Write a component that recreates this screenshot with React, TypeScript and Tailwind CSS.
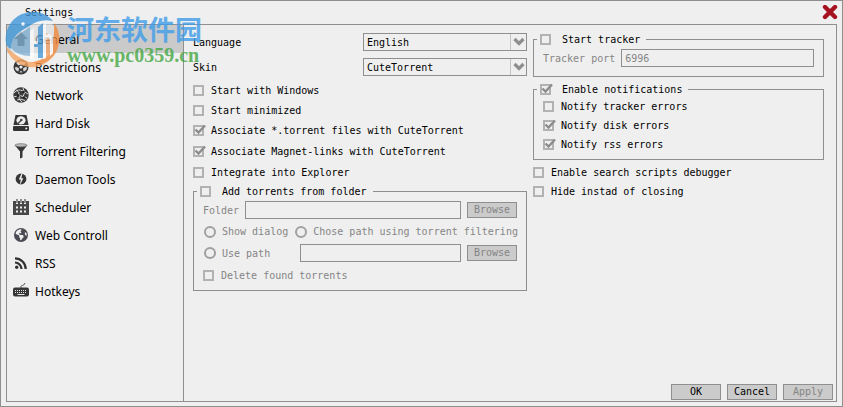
import { useId } from 'react'
import type { ReactNode } from 'react'
import clsx from 'clsx'
import { FaEarthAmericas } from 'react-icons/fa6'

function HomeIcon() {
  return (
    <svg viewBox="0 0 16 16" className="size-4">
      <path d="M8 1 15 8H11.500V15H4.500V8H1Z" fill="#454545" />
    </svg>
  )
}

function RestrictionsIcon() {
  return (
    <svg viewBox="0 0 16 16" className="size-4">
      <circle cx="8" cy="8" r="7.500" fill="#383838" />
      <path d="M3 3.800Q8 .8 13 3.800L10.500 6.500Q8 4.500 5.500 6.500Z" fill="#e4e4e4" />
      <circle cx="8" cy="8" r="1.600" fill="#efefef" />
      <path d="M1.800 8.500Q4 7 6 9.500L5.500 12.500Q2.500 12 1.800 8.500ZM14.200 8.500Q12 7 10 9.500L10.500 12.500Q13.500 12 14.200 8.500Z" fill="#d8d8d8" />
      <path d="M6.500 13.500Q8 10 9.500 13.500Z" fill="#c8c8c8" />
    </svg>
  )
}

function NetworkIcon() {
  return (
    <svg viewBox="0 0 16 16" className="size-4">
      <circle cx="8" cy="8" r="7.700" fill="#3a3a3a" />
      <path d="M1 6Q5 1 10 4T15 7M3 2.500Q7 5 6 9T9 15M1 10Q7 7 14 11M10 1Q13 6 10 10M4 13Q8 11 12 13.500" fill="none" stroke="#dcdcdc" strokeWidth="1" />
      <circle cx="10.500" cy="5" r="1.300" fill="#222" />
      <circle cx="5" cy="8.500" r="1.500" fill="#222" />
      <circle cx="11" cy="10.500" r="1.300" fill="#222" />
    </svg>
  )
}

function DiskIcon() {
  return (
    <svg viewBox="0 0 16 16" className="size-4">
      <path d="M2.500 0h11L15.500 10H.5Z" fill="#333" />
      <rect y="11" width="16" height="5" rx="1" fill="#333" />
      <ellipse cx="8" cy="5.300" rx="4.600" ry="4.100" fill="#ececec" />
      <circle cx="8.300" cy="5" r="1.300" fill="#444" />
      <path d="M8 5.500 4.500 9" stroke="#444" strokeWidth="1.200" />
      <circle cx="13.300" cy="13.500" r="1" fill="#eee" />
    </svg>
  )
}

function FilterIcon() {
  return (
    <svg viewBox="0 0 16 16" className="size-4">
      <path d="M2 2.500 7 8.500V15.500L9.500 14.500V8.500L14 2.500Z" fill="#383838" />
      <ellipse cx="8" cy="2.300" rx="6" ry="1.600" fill="#bdbdbd" stroke="#555" strokeWidth=".6" />
    </svg>
  )
}

function DaemonIcon() {
  return (
    <svg viewBox="0 0 16 16" className="size-4">
      <circle cx="8" cy="8" r="5.400" fill="#363636" />
      <path d="M9 1.500 5.800 8.500H7.800L6.800 14.500 10.300 7.300H8.300L9.500 2.500Z" fill="#efefef" />
    </svg>
  )
}

function CalendarIcon() {
  return (
    <svg viewBox="0 0 16 16" className="size-4">
      <path d="M0 2H3V5H5V2H7V5H9V2H11V5H13V2H16V16H0Z" fill="#484848" />
      <path d="M4 0V4M8 0V4M12 0V4" stroke="#484848" strokeWidth="1.200" />
      <path d="M3 8.500H13M3 12.500H13" stroke="#efefef" strokeWidth="2" strokeDasharray="2 2" />
    </svg>
  )
}

function RssIcon() {
  return (
    <svg viewBox="0 0 16 16" className="size-4">
      <circle cx="3.700" cy="12.300" r="1.700" fill="#333" />
      <path d="M2 7.500A6.500 6.500 0 0 1 8.500 14M2 3.300A10.700 10.700 0 0 1 12.700 14" fill="none" stroke="#333" strokeWidth="2.200" />
    </svg>
  )
}

function KeyboardIcon() {
  return (
    <svg viewBox="0 0 16 16" className="size-4">
      <path d="M8 5V3.500Q8 2.500 9.500 2.500T12 0" fill="none" stroke="#555" strokeWidth="1" />
      <rect y="4.500" width="16" height="9" rx="2" fill="#363636" />
      <path d="M2 7.500H14M2 9.500H14" stroke="#e4e4e4" strokeWidth="1" strokeDasharray="1 1" />
      <path d="M4.500 11.500H11.500" stroke="#e4e4e4" strokeWidth="1" />
    </svg>
  )
}

const SECTIONS: { name: string; icon: ReactNode }[] = [
  { name: 'General', icon: <HomeIcon /> },
  { name: 'Restrictions', icon: <RestrictionsIcon /> },
  { name: 'Network', icon: <NetworkIcon /> },
  { name: 'Hard Disk', icon: <DiskIcon /> },
  { name: 'Torrent Filtering', icon: <FilterIcon /> },
  { name: 'Daemon Tools', icon: <DaemonIcon /> },
  { name: 'Scheduler', icon: <CalendarIcon /> },
  { name: 'Web Controll', icon: <FaEarthAmericas className="size-3.5 mx-px text-[#4a4a52]" /> },
  { name: 'RSS', icon: <RssIcon /> },
  { name: 'Hotkeys', icon: <KeyboardIcon /> },
]

function Check({ label, checked, disabled, className }: { label: string; checked?: boolean; disabled?: boolean; className?: string }) {
  return (
    <label className={clsx('flex items-center whitespace-nowrap', disabled && 'text-[#858585]', className)}>
      <span className="relative size-[11px] shrink-0">
        <input type="checkbox" defaultChecked={checked} disabled={disabled} className="peer block size-[11px] appearance-none border-2 border-[#b2b2b2]" />
        <svg viewBox="0 0 13 12" className="pointer-events-none absolute left-0 -top-px hidden h-3 w-[13px] peer-checked:block">
          <path d="M2.500 5.500 5.500 8.500 12 1.500" fill="none" stroke="#8c8c8c" strokeWidth="2.400" />
        </svg>
      </span>
      {label}
    </label>
  )
}

function Radio({ label, className }: { label: string; className?: string }) {
  return (
    <label className={clsx('flex items-center gap-1.5 whitespace-nowrap', className)}>
      <input type="radio" name="target" disabled className="size-3 shrink-0 appearance-none rounded-full border-2 border-[#a0a0a0]" />
      {label}
    </label>
  )
}

function Combo({ label, value, options }: { label: string; value: string; options: string[] }) {
  const id = useId()
  return (
    <div className="flex items-center">
      <label htmlFor={id} className="w-[170px] shrink-0">{label}</label>
      <div className="relative flex-1">
        <select id={id} defaultValue={value} className="block h-[18px] w-full appearance-none border border-[#8f8f8f] pl-[3px] pr-5">
          {options.map(o => <option key={o}>{o}</option>)}
        </select>
        <span className="pointer-events-none absolute inset-y-px right-px flex w-4 items-center justify-center border-l border-[#c4c4c4]">
          <svg viewBox="0 0 12 10" className="h-2.5 w-3">
            <path d="M1.500 2 6 6.500 10.500 2" fill="none" stroke="#8f8f8f" strokeWidth="3.200" />
          </svg>
        </span>
      </div>
    </div>
  )
}

function Button({ label, disabled }: { label: string; disabled?: boolean }) {
  return (
    <button type="button" disabled={disabled} className="h-4 w-[50px] shrink-0 border border-[#8f8f8f] bg-[#cbcbcb] leading-3 disabled:text-[#858585]">
      {label}
    </button>
  )
}

function Group({ label, checked, className, children }: { label: string; checked?: boolean; className?: string; children: ReactNode }) {
  return (
    <fieldset className={clsx('min-w-0 border border-[#8f8f8f] pl-[3px]', className)}>
      <legend className="h-[15px] pl-[3px] pr-1.5">
        <Check label={label} checked={checked} className="h-[15px] gap-[11px]" />
      </legend>
      <div className="pl-1.5 pr-[9px]">{children}</div>
    </fieldset>
  )
}

function Watermark() {
  return (
    <div className="pointer-events-none absolute left-1 top-[9px] flex items-center gap-1.5 opacity-80">
      <svg viewBox="0 0 56 58" className="h-[58px] w-14 shrink-0">
        <circle cx="28" cy="30" r="25" fill="#f4f6f8" fillOpacity=".65" />
        <path d="M49 13A27 27 0 0 1 13 52Q34 55 43 44Q50 34 49 13Z" fill="#f28c3e" />
        <path d="M1 37A27 27 0 0 0 40 54Q22 56 1 37Z" fill="#f5a564" />
        <path d="M38 24Q44 22 46 27V42Q43 47 38 49Z" fill="#f3a368" />
        <path d="M1 33A27 27 0 0 1 48 11Q34 8 23 17Q6 25 6 39Q2 37 1 33Z" fill="#3f97da" />
        <path d="M6 38 7 29 25 17V46Q13 46 6 38Z" fill="#6aa5d0" fillOpacity=".8" />
        <path d="M33 17 38 13V48H33V37H29V31H33Z" fill="#4b9cda" />
        <path d="M25 21 29 18V31H33V34H29V49H25Z" fill="#fff" />
        <path d="M38 15 41 13V25Q46 22 48 28V43L45 46V30Q42 26 41 31V48L38 49Z" fill="#fff" />
        <circle cx="18" cy="14" r="1.800" fill="#fff" />
      </svg>
      <div className="whitespace-nowrap">
        <p className="font-['Noto_Sans_CJK_SC',sans-serif] text-[27px] leading-[31px] font-bold text-[#3f9de8]">河东软件园</p>
        <p className="font-['Liberation_Serif',serif] text-[20px] leading-[22px] font-bold text-[#45a845]">www.pc0359.cn</p>
      </div>
    </div>
  )
}

export default function App() {
  return (
    <div className="relative flex min-h-screen flex-col border border-[#8f8f8f] bg-[#efefef] px-[5px] pb-1 font-['DejaVu_Sans_Mono',monospace] text-[10px] leading-[15px] text-black">
      <header className="flex h-[23px] items-center justify-between pl-[19px]">
        <h1>Settings</h1>
        <button type="button" aria-label="Close" className="-mr-px">
          <svg viewBox="0 0 16 16" className="size-4">
            <path d="M3 2 13 12M13 2 3 12" stroke="#a61220" strokeWidth="4.400" strokeLinecap="round" />
          </svg>
        </button>
      </header>

      <div className="flex flex-1 border border-[#8f8f8f]">
        <nav className="w-[177px] shrink-0 border-r border-[#8f8f8f]">
          {SECTIONS.map((s, i) => (
            <a
              key={s.name}
              href="#"
              className={clsx("flex h-7 items-center gap-1.5 pl-1.5 font-['Noto_Sans',sans-serif] text-[12px]", i === 0 && 'bg-[#cacaca]')}
            >
              {s.icon}
              {s.name}
            </a>
          ))}
        </nav>

        <main className="flex min-w-0 flex-1 flex-col justify-between">
          <div className="grid grid-cols-[334fr_291fr] items-start gap-x-1.5 pl-[9px] pr-3">
            <div className="min-w-0 pt-2">
              <div className="flex flex-col gap-[7px] pb-1">
                <Combo label="Language" value="English" options={['English', 'Russian']} />
                <Combo label="Skin" value="CuteTorrent" options={['CuteTorrent']} />
              </div>
              <Check label="Start with Windows" className="h-5 gap-[7px]" />
              <Check label="Start minimized" className="h-5 gap-[7px]" />
              <Check label="Associate *.torrent files with CuteTorrent" checked className="h-5 gap-[7px]" />
              <Check label="Associate Magnet-links with CuteTorrent" checked className="mt-px h-[21px] gap-[7px]" />
              <Check label="Integrate into Explorer" className="h-[21px] gap-[7px]" />

              <Group label="Add torrents from folder" className="mt-px pb-1.5">
                <div className="flex flex-col gap-1 pt-0.5 text-[#858585]">
                  <div className="flex items-center gap-1.5">
                    <label htmlFor="folder">Folder</label>
                    <input id="folder" type="text" disabled className="h-[18px] min-w-0 flex-1 border border-[#8f8f8f] px-[3px]" />
                    <Button label="Browse" disabled />
                  </div>
                  <div className="flex h-[17px] items-center gap-[7px] pl-px">
                    <Radio label="Show dialog" />
                    <Radio label="Chose path using torrent filtering" />
                  </div>
                  <div className="flex items-center gap-1.5 pl-px">
                    <Radio label="Use path" className="w-[90px]" />
                    <input type="text" aria-label="Path" disabled className="h-[18px] min-w-0 flex-1 border border-[#8f8f8f] px-[3px]" />
                    <Button label="Browse" disabled />
                  </div>
                  <Check label="Delete found torrents" disabled className="h-[18px] gap-[7px]" />
                </div>
              </Group>
            </div>

            <div className="min-w-0 pt-[7px]">
              <Group label="Start tracker" className="pb-[9px]">
                <div className="flex items-center gap-1.5 pt-0.5 text-[#858585]">
                  <label htmlFor="port">Tracker port</label>
                  <input id="port" type="text" defaultValue="6996" disabled className="h-[18px] min-w-0 flex-1 border border-[#8f8f8f] px-[3px]" />
                </div>
              </Group>
              <Group label="Enable notifications" checked className="mt-[5px] pb-[5px]">
                <Check label="Notify tracker errors" className="h-[19px] gap-[7px]" />
                <Check label="Notify disk errors" checked className="h-[19px] gap-[7px]" />
                <Check label="Notify rss errors" checked className="h-[19px] gap-[7px]" />
              </Group>
              <Check label="Enable search scripts debugger" className="mt-[3px] h-[19px] gap-[7px]" />
              <Check label="Hide instad of closing" className="h-[19px] gap-[7px]" />
            </div>
          </div>

          <footer className="flex justify-end gap-1.5 pb-px pr-[3px]">
            <Button label="OK" />
            <Button label="Cancel" />
            <Button label="Apply" disabled />
          </footer>
        </main>
      </div>

      <Watermark />
    </div>
  )
}
